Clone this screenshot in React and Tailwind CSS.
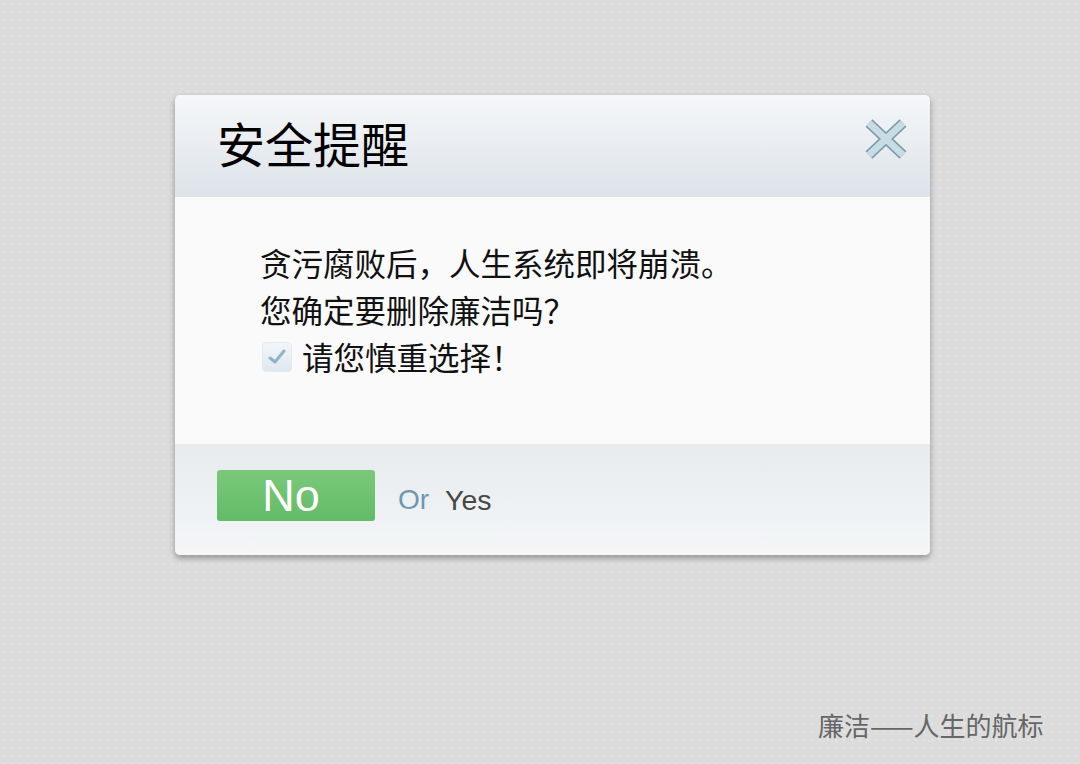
import React from "react";

const cjk = "font-['Noto_Sans_CJK_SC','Liberation_Sans',sans-serif]";

function CloseIcon(){
  return (
    <svg width="44" height="42" viewBox="0 0 44 42">
      <path d="M5 5 L39 37 M39 5 L5 37" stroke="#7f9ba7" strokeWidth="10" strokeLinecap="butt" />
      <path d="M5 5 L39 37 M39 5 L5 37" stroke="#c6dde5" strokeWidth="7" strokeLinecap="butt" />
    </svg>
  );
}

function CheckBox(){
  return (
    <span className="inline-flex items-center justify-center w-[30px] h-[30px] rounded-[4px] bg-gradient-to-b from-[#f2f6f9] to-[#dfe8ef] border border-[#e3eaf0]">
      <svg width="20" height="18" viewBox="0 0 20 18">
        <path d="M3 10 L8 14 L17 3" fill="none" stroke="#8fb3c9" strokeWidth="3" strokeLinecap="round" strokeLinejoin="round" />
      </svg>
    </span>
  );
}

export default function App(){
  return (
    <div className="w-[1080px] h-[764px] relative overflow-hidden bg-[#dcdcdc] bg-[radial-gradient(circle,#e5e5e5_1px,transparent_1.2px)] bg-[length:8px_8px]">
      <div className="pt-[95px] pl-[175px]">
        <div className="w-[755px] rounded-[5px] overflow-hidden shadow-[0_3px_6px_rgba(0,0,0,0.35)]">
          {/* header */}
          <div className="h-[102px] flex items-center justify-between pl-[42px] pr-[22px] bg-gradient-to-b from-[#f5f7f9] to-[#dde3e9]">
            <h1 className={`${cjk} text-[48px] leading-none text-black mt-[-8px]`}>安全提醒</h1>
            <div className="mb-[14px]"><CloseIcon /></div>
          </div>
          {/* body */}
          <div className={`${cjk} h-[247px] bg-[#fafafa] pl-[85px] pt-[42px] text-[31.5px] leading-[47px] text-[#111]`}>
            <div>贪污腐败后，人生系统即将崩溃。</div>
            <div>您确定要删除廉洁吗？</div>
            <div className="flex items-center gap-[10px] pl-[2px]">
              <CheckBox />
              <span>请您慎重选择！</span>
            </div>
          </div>
          {/* footer */}
          <div className="h-[111px] flex items-start pt-[26px] pl-[42px] bg-gradient-to-b from-[#e7ebee] to-[#f4f6f8]">
            <button className="w-[158px] h-[51px] rounded-[3px] bg-gradient-to-b from-[#7ac97a] to-[#63bb66] text-white text-[45px] leading-none font-['Liberation_Sans',sans-serif] flex items-center justify-center pr-[10px]">No</button>
            <span className="ml-[23px] mt-[16px] text-[28px] leading-none text-[#6b98ae] font-['Liberation_Sans',sans-serif]">Or</span>
            <span className="ml-[16px] mt-[16px] text-[28.5px] leading-none text-[#474747] font-['Liberation_Sans',sans-serif]">Yes</span>
          </div>
        </div>
      </div>
      <div className={`${cjk} absolute left-[818px] top-[709px] text-[26px] leading-[32px] text-[#666]`}>廉洁——人生的航标</div>
    </div>
  );
}
